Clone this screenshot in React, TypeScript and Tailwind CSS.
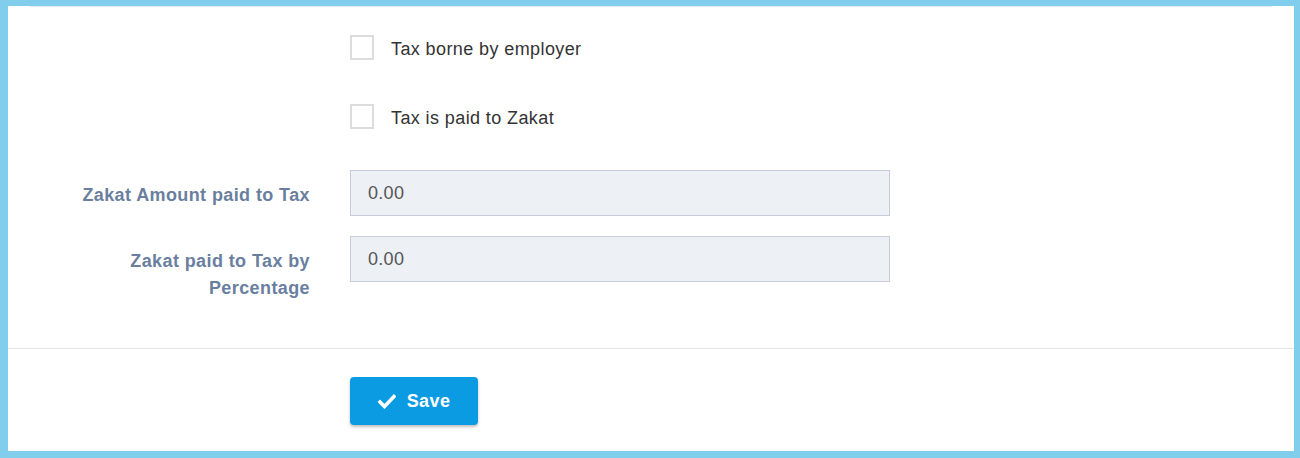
import React from 'react';

const FONT = { fontFamily: '"Liberation Sans", Arial, sans-serif' };

const CheckRow: React.FC<{ label: string }> = ({ label }) => (
  <div className="flex h-[27px] items-center">
    <div className="w-[302px] shrink-0" />
    <div className="ml-[40px] flex h-[27px] items-center">
      <span className="block h-[25px] w-[24px] border-2 border-[#dcdcdc] bg-white" />
      <span className="ml-[17px] mt-[4px] text-[18px] leading-[21px] tracking-[0.4px] text-[#333333]">{label}</span>
    </div>
  </div>
);

const FieldRow: React.FC<{ label: React.ReactNode; value: string }> = ({ label, value }) => (
  <div className="flex items-start">
    <div className="w-[302px] shrink-0 pt-[12px] text-right text-[18px] font-bold leading-[27px] tracking-[0.4px] text-[#6a7f9f]">
      {label}
    </div>
    <div className="ml-[40px] flex h-[46px] w-[540px] items-center border border-[#c6ccd9] bg-[#edf0f5] px-[17px] text-[18px] tracking-[0.3px] text-[#555555]">
      {value}
    </div>
  </div>
);

export default function App() {
  return (
    <div className="min-h-[458px] bg-[#81cdec] pb-[7px] pl-[8px] pr-[6px] pt-[6px]" style={FONT}>
      <div className="h-[445px] bg-white">
        <div className="mx-[22px] h-[1px] bg-[#e3eaf0]" />
        <div className="pt-[27px]">
          <CheckRow label="Tax borne by employer" />
          <div className="h-[42px]" />
          <CheckRow label="Tax is paid to Zakat" />
          <div className="h-[40px]" />
          <FieldRow label="Zakat Amount paid to Tax" value="0.00" />
          <div className="h-[20px]" />
          <FieldRow
            label={
              <>
                Zakat paid to Tax by
                <br />
                Percentage
              </>
            }
            value="0.00"
          />
        </div>
        <div className="mt-[46px] h-[1px] bg-[#e6e6e6]" />
        <div className="flex pt-[28px]">
          <div className="w-[302px] shrink-0" />
          <button className="ml-[40px] flex h-[48px] w-[128px] items-center justify-center gap-[11px] rounded-[4px] bg-[#0a9be3] text-[18px] font-bold tracking-[0.4px] text-white shadow-[0_2px_3px_rgba(0,0,0,0.25)]">
            <svg width="18" height="15" viewBox="0 0 18 15" fill="none">
              <path d="M2 8 L6.5 12.5 L16 2.5" stroke="white" strokeWidth="3.6" strokeLinecap="square" strokeLinejoin="miter" />
            </svg>
            Save
          </button>
        </div>
      </div>
    </div>
  );
}
